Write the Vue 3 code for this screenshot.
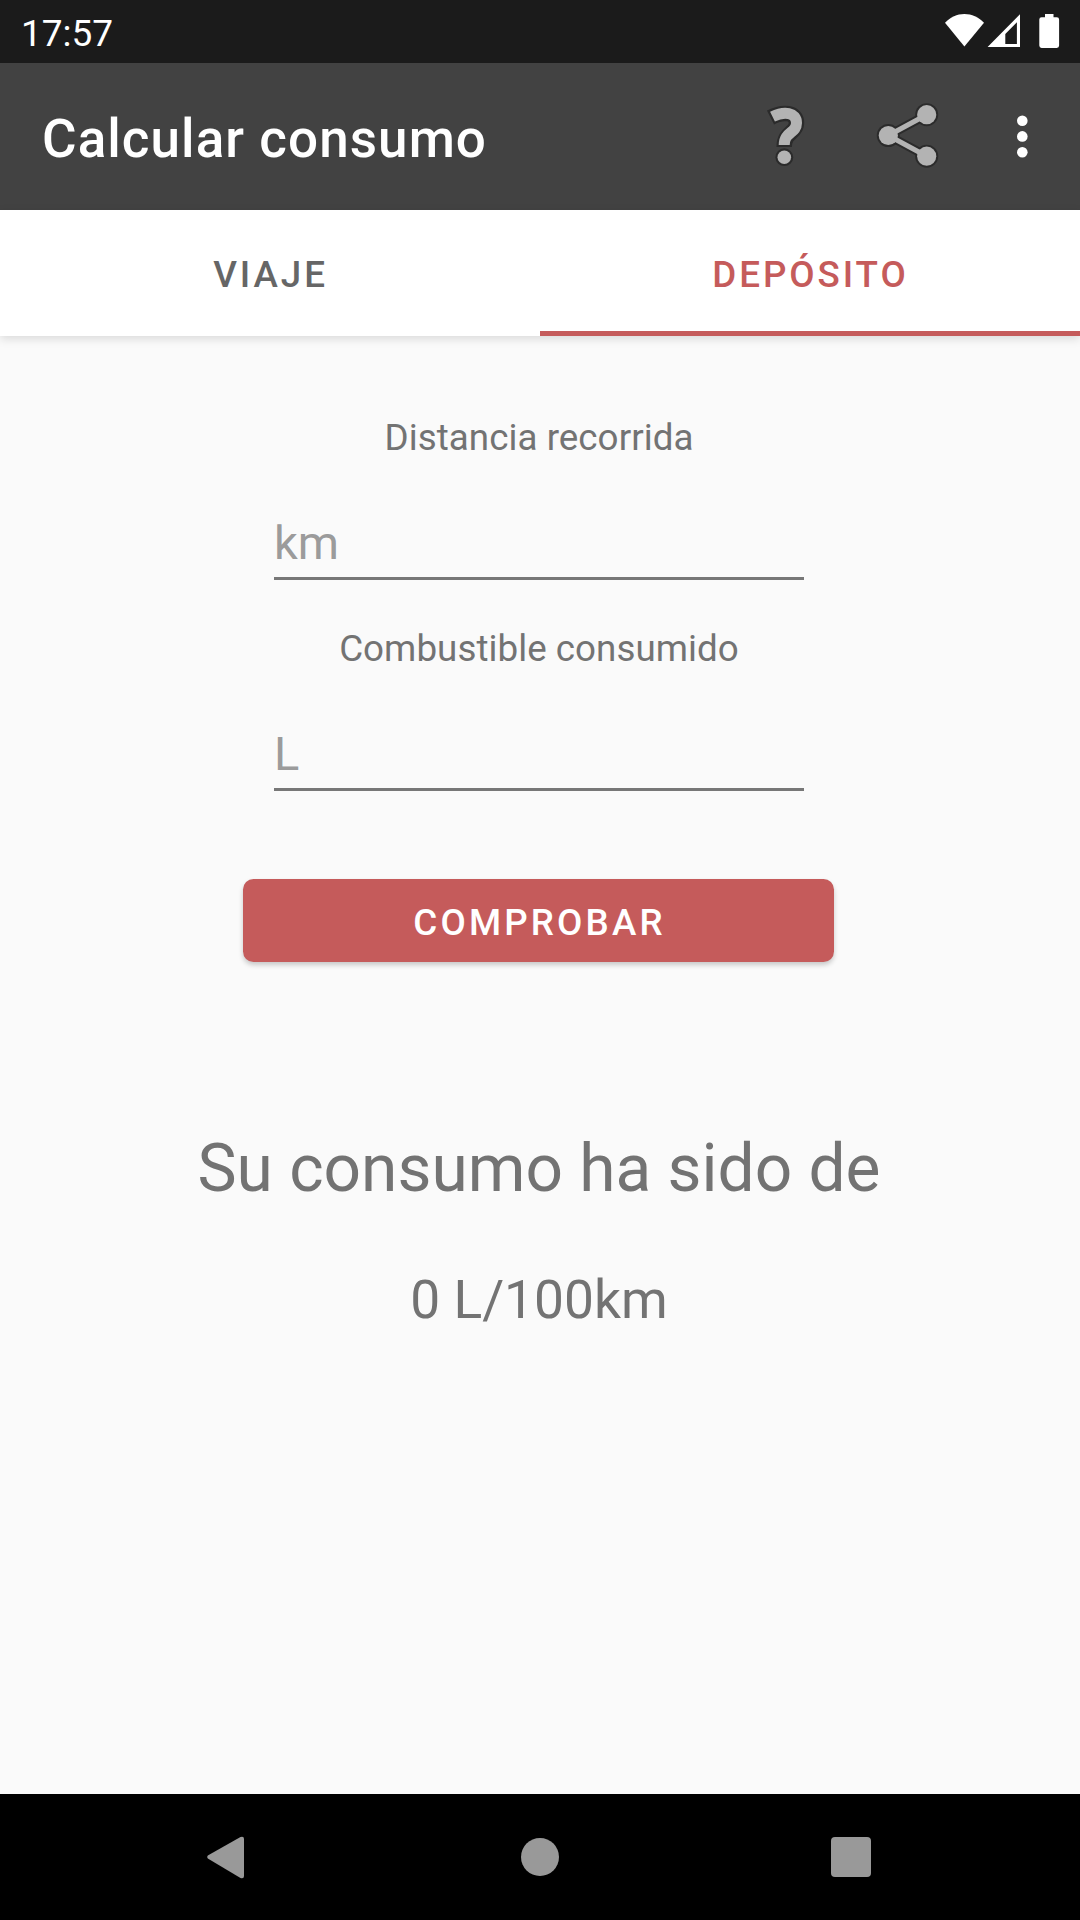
<template>
  <div class="screen">
    <header class="status-bar">
      <span class="clock">17:57</span>
      <svg class="status-icons" viewBox="0 0 120 63" aria-hidden="true">
        <path d="M5 22.800C10.500 17.200 17 14 24.400 14S38.500 17.200 44 22.800L24.400 46.500Z" />
        <path fill-rule="evenodd" d="M47.600 47L80 14.300V47ZM65.300 44H76.900V22.200L65.300 34Z" />
        <path d="M105 14h8.500v3.300h3.300a2.300 2.300 0 0 1 2.300 2.300v26a2.300 2.300 0 0 1-2.300 2.300h-15.200a2.300 2.300 0 0 1-2.300-2.300v-26a2.300 2.300 0 0 1 2.300-2.300h3.400Z" />
      </svg>
    </header>

    <div class="app-bar">
      <h1>Calcular consumo</h1>
      <button class="action help" aria-label="Ayuda">
        <svg viewBox="0 0 84 84" aria-hidden="true">
          <g class="help-outline">
            <path d="M27.500 37.500C40 31 53.500 32 53.500 43C53.500 53.500 41.200 51.500 41.200 67" />
            <circle cx="41.300" cy="77.200" r="8.900" />
          </g>
          <g class="help-shape">
            <path d="M29.500 36.600C41 31 53.500 32 53.500 43C53.500 53.500 41.200 51.500 41.200 65" />
            <circle cx="41.300" cy="77.200" r="6.800" />
          </g>
        </svg>
      </button>
      <button class="action share" aria-label="Compartir">
        <svg viewBox="0 0 84 84" aria-hidden="true">
          <g class="share-outline">
            <path d="M66.700 34.700L28.300 55.500L66.700 76.200" />
            <circle v-for="n in nodes" :key="n.y" :cx="n.x" :cy="n.y" r="11.500" />
          </g>
          <g class="share-shape">
            <path d="M66.700 34.700L28.300 55.500L66.700 76.200" />
            <circle v-for="n in nodes" :key="n.y" :cx="n.x" :cy="n.y" r="9.600" />
          </g>
        </svg>
      </button>
      <button class="action more" aria-label="Más opciones">
        <svg viewBox="0 0 84 84" aria-hidden="true">
          <circle cx="42.300" cy="40.700" r="5.300" />
          <circle cx="42.300" cy="56.400" r="5.300" />
          <circle cx="42.300" cy="72.200" r="5.300" />
        </svg>
      </button>
    </div>

    <nav class="tabs">
      <button
        v-for="tab in tabs"
        :key="tab"
        class="tab"
        :class="{ active: tab === activeTab }"
        @click="activeTab = tab"
      >
        {{ tab }}
      </button>
    </nav>

    <main class="content">
      <label for="distance">Distancia recorrida</label>
      <input id="distance" v-model="distance" inputmode="decimal" placeholder="km" />

      <label for="fuel">Combustible consumido</label>
      <input id="fuel" v-model="fuel" inputmode="decimal" placeholder="L" />

      <button class="submit" @click="calculate">COMPROBAR</button>

      <p class="result-title">Su consumo ha sido de</p>
      <p class="result-value">{{ result }} L/100km</p>
    </main>

    <footer class="nav-bar">
      <svg viewBox="0 0 1080 126" aria-hidden="true">
        <path d="M207.800 61.600a2 2 0 0 0 0 2.800L240.500 84q3.500 1.200 3.500-2V45q0-3.200-3.500-2Z" />
        <circle cx="540" cy="63" r="19" />
        <rect x="831" y="43" width="40" height="40" rx="4" />
      </svg>
    </footer>
  </div>
</template>

<script setup>
import { ref } from 'vue'

const tabs = ['VIAJE', 'DEPÓSITO']
const activeTab = ref('DEPÓSITO')

const distance = ref('')
const fuel = ref('')
const result = ref(0)

const nodes = [
  { x: 66.7, y: 34.7 },
  { x: 28.3, y: 55.5 },
  { x: 66.7, y: 76.2 },
]

const calculate = () => {
  const km = Number(distance.value)
  result.value = km > 0 ? Number(((Number(fuel.value) / km) * 100).toFixed(2)) : 0
}
</script>

<style>
body {
  background: #fafafa;
}
</style>

<style scoped>
.screen {
  display: flex;
  flex-direction: column;
  width: 1080px;
  height: 1920px;
  background: #fafafa;
  font-family: Roboto, 'Liberation Sans', sans-serif;
  color: #737373;
}

button {
  padding: 0;
  border: 0;
  background: none;
  font-family: inherit;
}

svg {
  display: block;
}

.status-bar {
  display: flex;
  justify-content: space-between;
  height: 63px;
  padding-left: 21px;
  padding-right: 20px;
  background: #1b1b1b;
  color: #ffffff;
}

.clock {
  padding-top: 12px;
  font-size: 37px;
  line-height: 43px;
}

.status-icons {
  width: 120px;
  height: 63px;
  fill: #ffffff;
}

.app-bar {
  display: flex;
  height: 147px;
  padding-left: 42px;
  padding-right: 16px;
  background: #424242;
}

.app-bar h1 {
  flex: 1;
  margin: 0;
  padding-top: 45px;
  font-size: 53px;
  font-weight: 500;
  line-height: 62px;
  letter-spacing: 0.02em;
  color: #ffffff;
}

.action {
  width: 84px;
  height: 147px;
}

.help {
  margin-right: 33px;
}

.share {
  margin-right: 36px;
}

.action svg {
  width: 84px;
  height: 84px;
  margin-bottom: 29px;
  overflow: visible;
}

.help-shape path,
.help-outline path {
  fill: none;
  stroke: #b3b3b3;
  stroke-width: 11;
}

.help-outline path {
  stroke: #2b2b2b;
  stroke-width: 15.5;
}

.help-shape circle {
  fill: #b3b3b3;
}

.help-outline circle {
  fill: #2b2b2b;
}

.share-shape {
  fill: #b3b3b3;
}

.share-shape path {
  fill: none;
  stroke: #b3b3b3;
  stroke-width: 5;
}

.share-outline {
  fill: #2b2b2b;
}

.share-outline path {
  fill: none;
  stroke: #2b2b2b;
  stroke-width: 9;
}

.more svg {
  fill: #ffffff;
}

.tabs {
  display: flex;
  height: 126px;
  background: #ffffff;
  box-shadow: 0 3px 9px rgba(0, 0, 0, 0.13);
}

.tab {
  flex: 1;
  padding-top: 7px;
  border-bottom: 5px solid transparent;
  font-size: 36.75px;
  font-weight: 500;
  line-height: 43px;
  letter-spacing: 0.08em;
  text-indent: 1px;
  color: #666666;
}

.tab.active {
  border-bottom-color: #c55b5b;
  color: #c55b5b;
}

.content {
  display: flex;
  flex: 1;
  flex-direction: column;
  align-items: center;
  padding-top: 80px;
  padding-right: 2px;
}

label {
  font-size: 36.75px;
  line-height: 43px;
  letter-spacing: 0.05px;
}

input {
  box-sizing: border-box;
  width: 530px;
  height: 66px;
  margin: 55px 0 47px;
  padding: 0 0 7px;
  border: 0;
  border-bottom: 3px solid #777777;
  outline: none;
  background: none;
  font-family: inherit;
  font-size: 47px;
  color: #212121;
}

input::placeholder {
  color: #9b9b9b;
  opacity: 1;
}

.submit {
  width: 591px;
  height: 83px;
  margin-top: 41px;
  margin-right: 1px;
  padding-top: 3px;
  border-radius: 10.5px;
  background: #c55b5b;
  box-shadow: 0 3px 5px rgba(0, 0, 0, 0.2);
  font-size: 36.75px;
  font-weight: 500;
  letter-spacing: 0.086em;
  text-indent: 2px;
  color: #ffffff;
}

.result-title {
  margin: 170px 0 0;
  font-size: 65.800px;
  line-height: 74px;
}

.result-value {
  margin: 63px 0 0;
  font-size: 53.300px;
  line-height: 62px;
}

.nav-bar {
  height: 126px;
  background: #000000;
}

.nav-bar svg {
  width: 1080px;
  height: 126px;
  fill: #999999;
}
</style>
